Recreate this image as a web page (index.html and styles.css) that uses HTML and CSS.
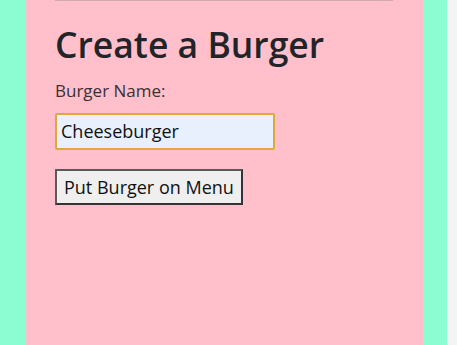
FILE: index.html
```html
<!DOCTYPE html>
<html lang="en">
<head>
    <meta charset="UTF-8">
    <meta name="viewport" content="width=device-width, initial-scale=1.0">
    <title>Burger Menu</title>
    <link rel="stylesheet" href="styles.css">
</head>
<body>
    <!-- main column -->
    <div class="page">
        <div class="column">
            <hr class="divider">

            <h2 class="form-title">Create a Burger</h2>

            <form class="burger-form">
                <label class="form-label" for="burgerName">Burger Name:</label>
                <input class="form-input" type="text" id="burgerName" value="Cheeseburger">
                <button class="form-btn" type="submit">Put Burger on Menu</button>
            </form>
        </div>
    </div>
    <div class="scroll-strip"></div>
</body>
</html>
```

FILE: styles.css
```css
* { margin: 0; padding: 0; box-sizing: border-box; }
html, body { height: 100%; }
body { display: flex; background: #f4f4f4; font-family: 'Open Sans', 'Noto Sans', sans-serif; color: #212529; overflow: hidden; }

/* page background */
.page { flex: 1; display: flex; background: #8cfdd2; padding: 0 24px 0 25px; }
.column { flex: 1; background: #ffc0cb; padding: 0 30px; }
.scroll-strip { width: 10px; background: #f4f4f4; }

.divider { border: none; border-top: 1px solid #d4aab2; margin-top: 0; }

/* form */
.form-title { font-size: 35.5px; font-weight: 600; line-height: 1.2; margin-top: 22px; margin-bottom: 14px; letter-spacing: 0; }
.burger-form { display: flex; flex-direction: column; align-items: flex-start; }
.form-label { font-size: 17px; line-height: 22px; color: #3a3034; margin-bottom: 11px; }
.form-input { width: 220px; height: 37px; padding: 0 4px; border: 2px solid #e0a83a; border-radius: 2px; background: #e8f0fe; font-family: inherit; font-size: 18px; color: #111; outline: none; }
.form-btn { margin-top: 19px; padding: 4px 7px; border: 2px solid #5a5a5a; border-right-color: #333; border-bottom-color: #333; background: #efefef; font-family: inherit; font-size: 18px; color: #111; }
```
